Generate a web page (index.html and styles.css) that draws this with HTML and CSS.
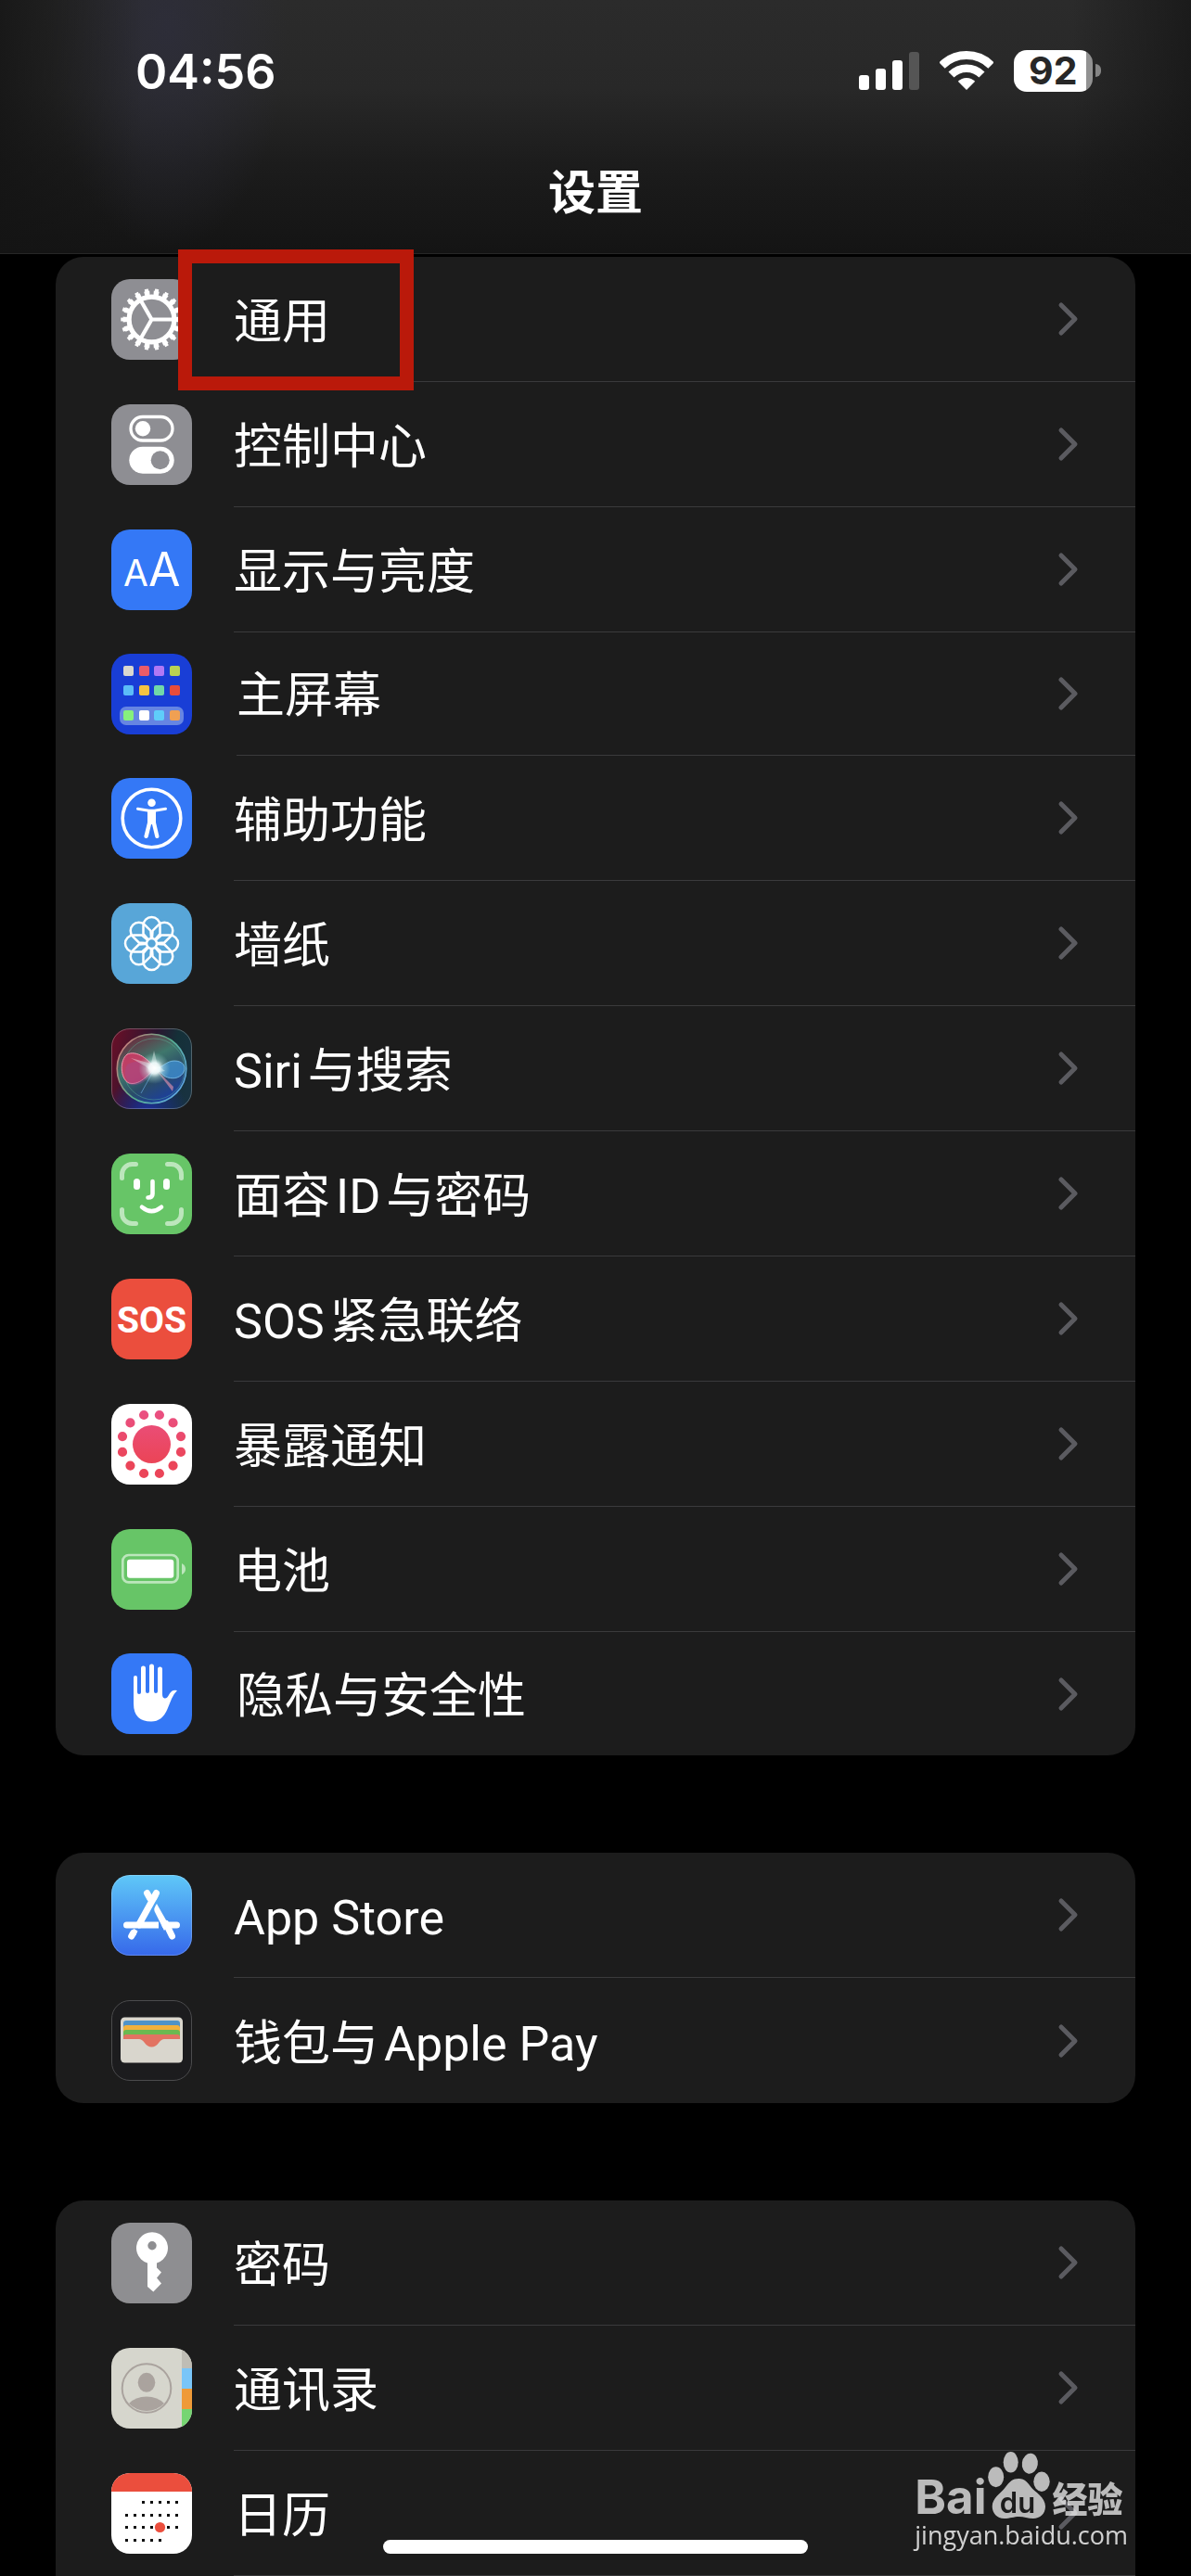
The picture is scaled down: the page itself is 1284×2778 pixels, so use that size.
FILE: index.html
```html
<!DOCTYPE html>
<html lang="zh-CN">
<head>
<meta charset="utf-8">
<meta name="viewport" content="width=device-width, initial-scale=1">
<title>设置</title>
<link rel="stylesheet" href="styles.css">
</head>
<body>
<svg class="sprite" aria-hidden="true">
  <symbol id="chevron" viewBox="0 0 24 40"><path d="M4 5l15 15L4 35" fill="none" stroke="#5b5b60" stroke-width="5" stroke-linecap="round" stroke-linejoin="round"/></symbol>
  <path id="petal" d="M34.500 24a9 9 0 0 1 18 0v9l-9 10.500-9-10.500z"/>
</svg>

<header class="header">
  <div class="status">
    <time class="status__time">04:56</time>
    <div class="status__icons">
      <svg class="signal" viewBox="0 0 65 41" aria-label="信号">
        <g fill="#fff"><rect y="25" width="11" height="16" rx="3"/><rect x="18" y="18" width="11" height="23" rx="3"/><rect x="36" y="9" width="11" height="32" rx="3"/></g>
        <rect x="54" width="11" height="41" rx="3" fill="#555"/>
      </svg>
      <svg class="wifi" viewBox="0 0 58 42" aria-label="无线局域网">
        <g fill="none" stroke="#fff"><path d="M2.500 15.500a37.500 37.500 0 0 1 53 0" stroke-width="9"/><path d="M12.500 25.500a23.300 23.300 0 0 1 33 0" stroke-width="8.500"/></g>
        <path d="M19.800 32.800a13 13 0 0 1 18.400 0L29 42z" fill="#fff"/>
      </svg>
      <div class="battery"><span class="battery__level">92</span><span class="battery__tip"></span></div>
    </div>
  </div>
  <h1 class="header__title">设置</h1>
</header>

<main class="content">
  <ul class="card">
    <li class="row row--marked"><a class="row__link" href="#general">
      <svg class="icon" viewBox="0 0 87 87"><rect width="87" height="87" rx="20" fill="#8e8e93"/>
        <g fill="none" stroke="#fff"><circle cx="43.500" cy="43.500" r="24.400" stroke-width="5.200"/><circle cx="43.500" cy="43.500" r="28.500" stroke-width="5" pathLength="180" stroke-dasharray="5.600 4.400" stroke-dashoffset="2.800"/><circle cx="43.500" cy="43.500" r="31.500" stroke-width="3.500" pathLength="180" stroke-dasharray="3.600 6.400" stroke-dashoffset="1.800"/><path d="M67 43.500H43.500L32 23.500M43.500 43.500L32 63.500" stroke-width="4.200"/></g></svg>
      <span class="row__body"><span class="row__label">通用</span><svg class="chevron"><use href="#chevron"/></svg></span></a></li>
    <li class="row"><a class="row__link" href="#control">
      <svg class="icon" viewBox="0 0 87 87"><rect width="87" height="87" rx="20" fill="#8e8e93"/>
        <rect x="21" y="13.500" width="45" height="25.500" rx="12.750" fill="none" stroke="#fff" stroke-width="3.300"/><circle cx="34" cy="26.300" r="8.200" fill="#fff"/><rect x="19.300" y="45.700" width="48.400" height="29" rx="14.500" fill="#fff"/><circle cx="52.700" cy="60.300" r="10" fill="#8e8e93"/></svg>
      <span class="row__body"><span class="row__label">控制中心</span><svg class="chevron"><use href="#chevron"/></svg></span></a></li>
    <li class="row"><a class="row__link" href="#display">
      <svg class="icon" viewBox="0 0 87 87"><rect width="87" height="87" rx="20" fill="#3478f6"/>
        <g class="icon__aa"><text x="13" y="61" font-size="39">A</text><text x="40" y="61" font-size="50">A</text></g></svg>
      <span class="row__body"><span class="row__label">显示与亮度</span><svg class="chevron"><use href="#chevron"/></svg></span></a></li>
    <li class="row row--short"><a class="row__link" href="#home">
      <svg class="icon" viewBox="0 0 87 87"><rect width="87" height="87" rx="20" fill="#193ed6"/><rect x="9" y="57" width="69" height="20" rx="7" fill="#6685e2"/>
        <rect x="13" y="13" width="11" height="11" rx="2" fill="#d9d7cf"/><rect x="30" y="13" width="11" height="11" rx="2" fill="#eb5c69"/><rect x="46" y="13" width="11" height="11" rx="2" fill="#b078f5"/><rect x="63" y="13" width="11" height="11" rx="2" fill="#b9d253"/>
        <rect x="13" y="34" width="11" height="11" rx="2" fill="#5bbcf8"/><rect x="30" y="34" width="11" height="11" rx="2" fill="#f6c443"/><rect x="46" y="34" width="11" height="11" rx="2" fill="#71d8a8"/><rect x="63" y="34" width="11" height="11" rx="2" fill="#e74c3c"/>
        <rect x="13" y="61" width="11" height="11" rx="2" fill="#86f07c"/><rect x="30" y="61" width="11" height="11" rx="2" fill="#fff"/><rect x="46" y="61" width="11" height="11" rx="2" fill="#5fcdfa"/><rect x="63" y="61" width="11" height="11" rx="2" fill="#f0a053"/></svg>
      <span class="row__body"><span class="row__label">主屏幕</span><svg class="chevron"><use href="#chevron"/></svg></span></a></li>
    <li class="row"><a class="row__link" href="#accessibility">
      <svg class="icon" viewBox="0 0 87 87"><rect width="87" height="87" rx="20" fill="#3478f6"/>
        <circle cx="43.500" cy="43.500" r="31.300" fill="none" stroke="#fff" stroke-width="3.600"/><circle cx="43.500" cy="26.700" r="4.300" fill="#fff"/><path d="M28.500 33.200l12 2h6l12-2" fill="none" stroke="#fff" stroke-width="3" stroke-linecap="round"/><path d="M39 34h9v14l3.500 15q0 2-2 2t-2.200-1.500L44 50h-1l-3.300 13.500Q39 65 37.300 65t-2-2L39 48z" fill="#fff"/></svg>
      <span class="row__body"><span class="row__label">辅助功能</span><svg class="chevron"><use href="#chevron"/></svg></span></a></li>
    <li class="row"><a class="row__link" href="#wallpaper">
      <svg class="icon" viewBox="0 0 87 87"><rect width="87" height="87" rx="20" fill="#58a6d8"/>
        <g fill="none" stroke="#fff" stroke-width="2.500"><use href="#petal"/><use href="#petal" transform="rotate(45 43.500 43.500)"/><use href="#petal" transform="rotate(90 43.500 43.500)"/><use href="#petal" transform="rotate(135 43.500 43.500)"/><use href="#petal" transform="rotate(180 43.500 43.500)"/><use href="#petal" transform="rotate(225 43.500 43.500)"/><use href="#petal" transform="rotate(270 43.500 43.500)"/><use href="#petal" transform="rotate(315 43.500 43.500)"/><circle cx="43.500" cy="43.500" r="5.500" fill="#58a6d8"/></g></svg>
      <span class="row__body"><span class="row__label">墙纸</span><svg class="chevron"><use href="#chevron"/></svg></span></a></li>
    <li class="row"><a class="row__link" href="#siri">
      <svg class="icon" viewBox="0 0 87 87">
        <defs>
          <linearGradient id="siriBg" x1="0" y1=".3" x2="1" y2=".6"><stop offset="0" stop-color="#641028"/><stop offset=".45" stop-color="#2a1630"/><stop offset=".7" stop-color="#153038"/><stop offset="1" stop-color="#183240"/></linearGradient>
          <radialGradient id="siriBlue" cx=".45" cy="1.050" r=".5"><stop offset="0" stop-color="#1c2f9c"/><stop offset="1" stop-color="#1c2f9c" stop-opacity="0"/></radialGradient>
          <linearGradient id="siriOrb" x1=".1" y1=".1" x2=".6" y2="1"><stop offset="0" stop-color="#6b2a3c"/><stop offset=".4" stop-color="#3f776c"/><stop offset=".7" stop-color="#2a4c68"/><stop offset="1" stop-color="#1c3f9c"/></linearGradient>
          <linearGradient id="siriRing" x1="0" y1=".2" x2="1" y2=".8"><stop offset="0" stop-color="#d07a7a"/><stop offset=".5" stop-color="#55b08c"/><stop offset="1" stop-color="#62a8e8"/></linearGradient>
          <radialGradient id="siriGlow"><stop offset="0" stop-color="#fff"/><stop offset=".35" stop-color="#f4ffff" stop-opacity=".9"/><stop offset=".6" stop-color="#c8ece8" stop-opacity=".4"/><stop offset="1" stop-color="#9fe0d4" stop-opacity="0"/></radialGradient>
        </defs>
        <rect width="87" height="87" rx="20" fill="url(#siriBg)"/><rect width="87" height="87" rx="20" fill="url(#siriBlue)"/>
        <circle cx="43.500" cy="43.500" r="37.300" fill="url(#siriOrb)" stroke="url(#siriRing)" stroke-width="1.600"/>
        <circle cx="46" cy="44" r="33" fill="none" stroke="#5fc09f" stroke-opacity=".4"/>
        <path d="M47 43C37 30 26 24 17 28 9 34 9 54 19 59 30 62 39 51 47 43z" fill="#d23a66" fill-opacity=".85" stroke="#f29ab0"/>
        <path d="M47 43C36 34 25 34 17 39c-4 8-2 16 4 22 12 2 20-8 26-18z" fill="#a34a90" fill-opacity=".4"/>
        <path d="M47 43c8 0 12-8 21-8s13 6 10 12-10 8-17 6-8-8-14-10z" fill="#3f8fd0" fill-opacity=".8" stroke="#80c5f0" stroke-width=".8"/>
        <path d="M47 43l20 20-1 5z" fill="#d08aa8" fill-opacity=".7"/><path d="M47 43L32 70" stroke="#6fb0ea" stroke-opacity=".6"/>
        <path d="M46 24l4 16 8 6-13 2-8-7-16-9 22 6z" fill="#fff" fill-opacity=".4"/>
        <circle cx="46.500" cy="43" r="17" fill="url(#siriGlow)"/>
        <rect x=".5" y=".5" width="86" height="86" rx="19.500" fill="none" stroke="#fff" stroke-opacity=".25"/></svg>
      <span class="row__body"><span class="row__label">Siri<span class="thin-gap"></span>与搜索</span><svg class="chevron"><use href="#chevron"/></svg></span></a></li>
    <li class="row"><a class="row__link" href="#faceid">
      <svg class="icon" viewBox="0 0 87 87"><rect width="87" height="87" rx="20" fill="#67c567"/>
        <path d="M11.500 26.500v-4a11 11 0 0 1 11-11h4M60.500 11.500h4a11 11 0 0 1 11 11v4M75.500 60.500v4a11 11 0 0 1-11 11h-4M26.500 75.500h-4a11 11 0 0 1-11-11v-4" fill="none" stroke="#bce6bc" stroke-width="5" stroke-linecap="round"/>
        <rect x="24" y="27" width="7" height="12" rx="3.500" fill="#fff"/><rect x="56" y="27" width="7" height="12" rx="3.500" fill="#fff"/><path d="M44.500 30v13.500q0 4-5 4M33 57.800q10.500 8.700 21 0" fill="none" stroke="#fff" stroke-width="4.600" stroke-linecap="round"/></svg>
      <span class="row__body"><span class="row__label">面容<span class="thin-gap"></span>ID<span class="thin-gap"></span>与密码</span><svg class="chevron"><use href="#chevron"/></svg></span></a></li>
    <li class="row"><a class="row__link" href="#sos">
      <svg class="icon" viewBox="0 0 87 87"><rect width="87" height="87" rx="20" fill="#eb4e3d"/><text class="icon__sos" x="43.500" y="58" text-anchor="middle">SOS</text></svg>
      <span class="row__body"><span class="row__label">SOS<span class="thin-gap"></span>紧急联络</span><svg class="chevron"><use href="#chevron"/></svg></span></a></li>
    <li class="row"><a class="row__link" href="#exposure">
      <svg class="icon" viewBox="0 0 87 87"><defs><linearGradient id="pink" gradientUnits="userSpaceOnUse" x1="0" y1="8" x2="0" y2="60"><stop offset="0" stop-color="#ea5082"/><stop offset="1" stop-color="#eb4559"/></linearGradient></defs>
        <rect width="87" height="87" rx="20" fill="#fff"/><circle cx="43.500" cy="43.500" r="20.500" fill="url(#pink)"/><circle cx="43.500" cy="43.500" r="32.600" fill="none" stroke="url(#pink)" stroke-width="10.200" stroke-linecap="round" pathLength="12" stroke-dasharray="0 1" stroke-dashoffset=".5"/></svg>
      <span class="row__body"><span class="row__label">暴露通知</span><svg class="chevron"><use href="#chevron"/></svg></span></a></li>
    <li class="row"><a class="row__link" href="#battery">
      <svg class="icon" viewBox="0 0 87 87"><rect width="87" height="87" rx="20" fill="#67c567"/><rect x="12.300" y="28" width="59.400" height="29.400" rx="6.500" fill="none" stroke="#bce6bc" stroke-width="2.700"/><rect x="17" y="32.700" width="50.300" height="20" rx="3" fill="#fff"/><path d="M76 37q4 2 4 6t-4 6z" fill="#bce6bc"/></svg>
      <span class="row__body"><span class="row__label">电池</span><svg class="chevron"><use href="#chevron"/></svg></span></a></li>
    <li class="row row--short"><a class="row__link" href="#privacy">
      <svg class="icon" viewBox="0 0 87 87"><rect width="87" height="87" rx="20" fill="#3478f6"/>
        <path d="M24 26a2 2 0 0 1 4 0v16q0 2 2 2t2-2V16a2.500 2.500 0 0 1 5 0v25q0 2 2 2t2-2V14a2.500 2.500 0 0 1 5 0v27q0 2 2 2t2-2V17a2.500 2.500 0 0 1 5 0v27q0 4 2.500 4.500t5-4.500Q65.500 38.500 71 40q-4 4-6 9l-4.500 11Q55 73.500 43 73.500 24 73.500 24 54z" fill="#fff"/></svg>
      <span class="row__body"><span class="row__label">隐私与安全性</span><svg class="chevron"><use href="#chevron"/></svg></span></a></li>
  </ul>

  <ul class="card">
    <li class="row"><a class="row__link" href="#appstore">
      <svg class="icon" viewBox="0 0 87 87"><defs><linearGradient id="store" x1="0" y1="0" x2="0" y2="1"><stop offset="0" stop-color="#5fc8f8"/><stop offset="1" stop-color="#3668ea"/></linearGradient></defs>
        <rect width="87" height="87" rx="20" fill="url(#store)"/><rect x=".5" y=".5" width="86" height="86" rx="19.500" fill="none" stroke="#fff" stroke-opacity=".2"/>
        <g fill="none" stroke="#fff" stroke-width="7"><g stroke-linecap="round"><path d="M38.500 19.500l3 5.500M48.500 19.500l-3 5.500M58 54h12.500M16.500 54H30M21.700 66l2-3.500M59 52.500L65.500 66"/></g><path d="M47.500 21.500L29.500 54M29 54h22"/></g><path d="M24.500 58l4 2.500-2.500 5-6-3z" fill="#fff"/><path d="M49 31l13 23-5 6L46.500 39q-1-3 2.500-8z" fill="#fff"/></svg>
      <span class="row__body"><span class="row__label">App Store</span><svg class="chevron"><use href="#chevron"/></svg></span></a></li>
    <li class="row"><a class="row__link" href="#wallet">
      <svg class="icon" viewBox="0 0 87 87"><rect x=".5" y=".5" width="86" height="86" rx="19.500" fill="#1c1c1e" stroke="#4b4b4d"/>
        <rect x="10" y="18.500" width="67" height="49" rx="4.500" fill="#d9d6cd"/><path d="M13 30v-5q0-3 3-3h55q3 0 3 3v5z" fill="#4f93c8"/><path d="M13 35v-5q0-3 3-3h55q3 0 3 3v5z" fill="#f2b13c"/><path d="M13 40v-5q0-3 3-3h55q3 0 3 3v5z" fill="#6bb950"/><path d="M13 42v-2q0-3 3-3h55q3 0 3 3v2H57q-3 0-5.500 3.500-3.500 5-8 5t-8-5Q33 42 30 42z" fill="#e27362"/></svg>
      <span class="row__body"><span class="row__label">钱包与<span class="thin-gap"></span>Apple Pay</span><svg class="chevron"><use href="#chevron"/></svg></span></a></li>
  </ul>

  <ul class="card card--open">
    <li class="row"><a class="row__link" href="#passwords">
      <svg class="icon" viewBox="0 0 87 87"><rect width="87" height="87" rx="20" fill="#8e8e91"/><path d="M39 43.500a17 17 0 1 1 10 0v5l5 5-5 6 5 6-8.700 9L39 69z" fill="#fff"/><circle cx="44" cy="24.700" r="4.700" fill="#8e8e91"/></svg>
      <span class="row__body"><span class="row__label">密码</span><svg class="chevron"><use href="#chevron"/></svg></span></a></li>
    <li class="row"><a class="row__link" href="#contacts">
      <svg class="icon" viewBox="0 0 87 87"><defs><clipPath id="tile"><rect width="87" height="87" rx="20"/></clipPath></defs>
        <g clip-path="url(#tile)"><rect width="87" height="87" fill="#d6d6cd"/><rect x="76" width="11" height="22" fill="#bfbdb5"/><rect x="76" y="22" width="11" height="22" fill="#79c5f8"/><rect x="76" y="44" width="11" height="22" fill="#ef9a38"/><rect x="76" y="66" width="11" height="21" fill="#76d572"/></g>
        <circle cx="38" cy="43.500" r="26.300" fill="none" stroke="#aaa39e" stroke-width="2"/><ellipse cx="38" cy="37.300" rx="9.300" ry="10.500" fill="#aaa39e"/><path d="M19 60q7-7.500 19-7.500T57 60a26.500 26.500 0 0 1-38 0z" fill="#aaa39e"/></svg>
      <span class="row__body"><span class="row__label">通讯录</span><svg class="chevron"><use href="#chevron"/></svg></span></a></li>
    <li class="row"><a class="row__link" href="#calendar">
      <svg class="icon" viewBox="0 0 87 87"><rect width="87" height="87" rx="20" fill="#fff"/><path d="M0 20A20 20 0 0 1 20 0h47a20 20 0 0 1 20 20z" fill="#eb4e3d"/>
        <path d="M33 31.500h42M15 45.500h60M15 58.500h60M15 72.500h42" stroke="#111" stroke-width="3" stroke-dasharray="3 6"/><circle cx="52.500" cy="58.500" r="5.600" fill="#eb4e3d"/></svg>
      <span class="row__body"><span class="row__label">日历</span><svg class="chevron"><use href="#chevron"/></svg></span></a></li>
  </ul>
</main>

<div class="watermark">
  <div class="watermark__brand">
    <span class="watermark__bai">Bai</span>
    <svg class="watermark__paw" viewBox="0 0 67 72"><g fill="#bbb"><ellipse cx="8.700" cy="27.300" rx="8.500" ry="11"/><ellipse cx="24.700" cy="11.300" rx="8" ry="11.200"/><ellipse cx="45.300" cy="12.700" rx="8.500" ry="11" transform="rotate(8 45 13)"/><ellipse cx="58" cy="32.300" rx="8.700" ry="10.700"/><path d="M33.300 29c7 0 10 5 13.500 9.500S62 49 62 59c0 8-6 13-13 13-6 0-10-2-15.500-2S24 72 17.500 72C10 72 4.700 66 4.700 59c0-9 9-14 14-20.500S26.500 29 33.300 29z"/></g><text class="watermark__du" x="32" y="66" text-anchor="middle">du</text></svg>
    <span class="watermark__jy">经验</span>
  </div>
  <div class="watermark__url">jingyan.baidu.com</div>
</div>
<div class="home-indicator"></div>
</body>
</html>
```
FILE: styles.css
```css
*, *::before, *::after { box-sizing: border-box; }

body {
  margin: 0;
  background: #000;
  color: #fff;
  font-family: Inter, "Noto Sans CJK SC", sans-serif;
  font-size: 52px;
  line-height: 60px;
}

.sprite { position: absolute; width: 0; height: 0; }

/* Header */
.header {
  display: flex;
  flex-direction: column;
  height: 274px;
  border-bottom: 1px solid #262626;
  background:
    linear-gradient(90deg, rgba(20, 20, 20, .8), rgba(20, 20, 20, 0) 12%, rgba(20, 20, 20, 0) 90%, rgba(20, 20, 20, .7)),
    radial-gradient(130px 240px at 14% 30px, rgba(46, 46, 60, .8), rgba(46, 46, 60, 0)),
    linear-gradient(180deg, #2b2b2b, #282828 35%, #1c1c1c 65%, #141414);
}

.status {
  display: flex;
  justify-content: space-between;
  align-items: center;
  height: 152px;
  padding: 0 97px 0 146px;
}

.status__time { padding-top: 4px; font-weight: 600; }

.status__icons { display: flex; align-items: center; gap: 22px; }

.signal { width: 65px; height: 41px; }

.wifi { width: 58px; height: 42px; }

.battery { display: flex; align-items: center; gap: 3px; }

.battery__level {
  width: 85px;
  height: 45px;
  border-radius: 14px;
  background: linear-gradient(90deg, #fff 78px, #929292 78px);
  color: #272727;
  font-size: 41px;
  font-weight: 700;
  line-height: 45px;
  padding-left: 16px;
}

.battery__tip { width: 6px; height: 14px; border-radius: 0 6px 6px 0; background: #858585; }

.header__title {
  margin: 26px 0 0;
  font-size: 51px;
  font-weight: 600;
  text-align: center;
}

/* Setting groups */
.content {
  display: flex;
  flex-direction: column;
  gap: 105px;
  padding: 3px 60px 0;
}

.card {
  margin: 0;
  padding: 0;
  list-style: none;
  border-radius: 30px;
  background: #1c1c1c;
}

.card--open { border-radius: 30px 30px 0 0; }

.row { position: relative; height: 135px; }

.row__link {
  display: flex;
  align-items: center;
  gap: 45px;
  height: 100%;
  padding-left: 60px;
  color: inherit;
  text-decoration: none;
}

.row--short { height: 133px; }

.row--short .row__link { gap: 48px; }

.icon { flex: none; width: 87px; height: 87px; }

.icon__aa { font-family: Inter, sans-serif; font-weight: 400; fill: #fff; }

.icon__sos { font-family: Roboto, sans-serif; font-size: 39px; font-weight: 700; fill: #fff; }

.row__body {
  display: flex;
  flex: 1;
  align-items: center;
  justify-content: space-between;
  height: 100%;
  padding-right: 60px;
  border-bottom: 1px solid #3a3a3c;
}

.row__label { padding-top: 8px; font-family: Roboto, "Noto Sans CJK SC", sans-serif; }

.row--short .row__label { padding-top: 6px; }

.card:not(.card--open) .row:last-child .row__body { border-bottom: 0; }

.thin-gap { display: inline-block; width: 6px; }

.chevron { flex: none; width: 24px; height: 40px; }

/* Highlight frame around the first entry */
.row--marked::after {
  content: "";
  position: absolute;
  top: -8px;
  left: 132px;
  width: 254px;
  height: 152px;
  border: 15px solid #ba190a;
  pointer-events: none;
}

/* Overlays */
.watermark {
  position: fixed;
  right: 68px;
  bottom: 22px;
  color: rgba(255, 255, 255, .7);
  pointer-events: none;
}

.watermark__brand { display: flex; align-items: flex-end; gap: 2px; height: 72px; }

.watermark__bai { font-size: 51px; font-weight: 700; line-height: 46px; }

.watermark__paw { width: 67px; height: 72px; }

.watermark__du { font-family: Inter, sans-serif; font-size: 31px; font-weight: 600; fill: #1c1c1c; }

.watermark__jy { font-size: 38px; font-weight: 900; line-height: 42px; }

.watermark__url {
  margin-bottom: 4px;
  color: rgba(255, 255, 255, .8);
  font-family: "Open Sans", sans-serif;
  font-size: 27px;
  line-height: 36px;
  text-align: center;
}

.home-indicator {
  position: fixed;
  bottom: 24px;
  left: 50%;
  width: 458px;
  height: 15px;
  margin-left: -229px;
  border-radius: 8px;
  background: #fff;
}
```
